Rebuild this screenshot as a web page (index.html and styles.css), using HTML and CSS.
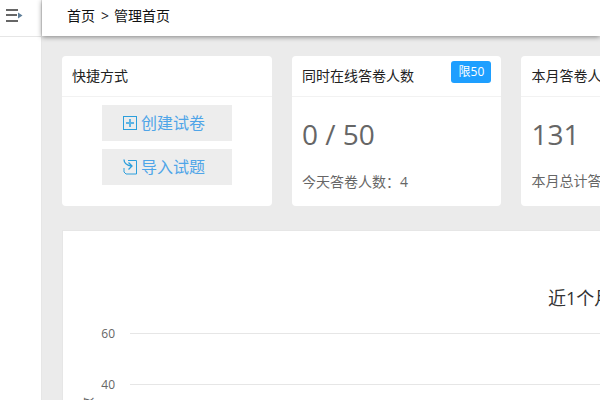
FILE: index.html
```html
<!DOCTYPE html>
<html lang="zh">
<head>
<meta charset="utf-8">
<title>管理首页</title>
<link rel="stylesheet" href="styles.css">
</head>
<body>
<div class="app">
  <aside class="side">
    <div class="side-top">
      <svg class="toggle" width="18" height="14" viewBox="0 0 18 14"><path d="M0 1h12M0 6h11M0 12h12" stroke="#666" stroke-width="2" fill="none"/><path d="M12 3.500l4.500 3-4.500 3z" fill="#5f7f99"/></svg>
    </div>
  </aside>
  <div class="main">
    <header class="top"><span class="crumb-a">首页</span><span class="sep">&gt;</span><span class="crumb-b">管理首页</span></header>
    <div class="content">
      <div class="cards">
        <section class="card">
          <div class="card-head">快捷方式</div>
          <div class="quick">
            <a class="qbtn"><svg width="14" height="14" viewBox="0 0 14 14"><rect x=".5" y=".5" width="13" height="13" fill="none" stroke="#2c9fdc"/><path d="M3 7h8M7 3v8" stroke="#5db4e4" stroke-width="2"/></svg>创建试卷</a>
            <a class="qbtn"><svg width="14" height="16" viewBox="0 0 14 16"><path d="M5 1.500h8.500v13.500H3l-2-2V9" fill="none" stroke="#2c9fdc"/><path d="M1 .5c0 4 3 6 8 6.500M5.500 3.500L9 7l-3.500 3.500" fill="none" stroke="#2c9fdc" stroke-width="1.300"/></svg>导入试题</a>
          </div>
        </section>
        <section class="card">
          <div class="card-head">同时在线答卷人数<span class="badge">限50</span></div>
          <div class="stat">
            <div class="num">0 / 50</div>
            <div class="note">今天答卷人数<span class="fw">：</span>4</div>
          </div>
        </section>
        <section class="card">
          <div class="card-head">本月答卷人数</div>
          <div class="stat">
            <div class="num">131</div>
            <div class="note">本月总计答卷人数</div>
          </div>
        </section>
      </div>
      <section class="chart">
        <h2 class="chart-title">近1个月答卷人数</h2>
        <div class="row r60"><span class="tick">60</span><i class="line"></i></div>
        <div class="row r40"><span class="tick">40</span><i class="line"></i></div>
        <span class="yname">人数</span>
      </section>
    </div>
  </div>
</div>
</body>
</html>
```
FILE: styles.css
```css
* { box-sizing: border-box; }
html, body { margin: 0; height: 100%; overflow: hidden; }
body { font-family: "Open Sans", "Noto Sans CJK SC", sans-serif; background: #fff; }
.app { display: flex; width: 600px; height: 400px; overflow: hidden; }
.side { width: 42px; flex: none; border-right: 1px solid #e6e6e6; background: #fff; }
.side-top { height: 37px; border-bottom: 1px solid #e6e6e6; padding: 9px 0 0 6px; }
.toggle { display: block; }
.main { flex: none; width: 558px; background: #ebebeb; }
.top { height: 36px; background: #fff; box-shadow: 0 1px 5px rgba(0,0,0,.45); padding-left: 25px; line-height: 32px; font-size: 14px; color: #222; display: flex; position: relative; }
.crumb-a { color: #111; }
.sep { margin: 0 5px 0 6px; }
.crumb-b { color: #111; }
.content { padding: 20px 0 0 20px; width: 700px; }
.cards { display: flex; gap: 20px; }
.card { width: 210px; height: 150px; background: #fff; border-radius: 4px; flex: none; }
.card + .card { width: 209.4px; }
.card-head { height: 41px; border-bottom: 1px solid #f2f2f2; padding: 0 10px; line-height: 40px; font-size: 14px; color: #222; display: flex; justify-content: space-between; align-items: center; }
.quick { display: flex; flex-direction: column; align-items: center; gap: 8px; padding-top: 8px; }
.qbtn { width: 130px; height: 36px; background: #ededed; color: #4fa5e8; font-size: 16px; line-height: 34px; padding: 0 0 0 21px; display: flex; align-items: center; gap: 4px; }
.badge { background: #1e9fff; color: #fff; font-size: 12px; height: 22px; line-height: 22px; width: 40px; text-align: center; border-radius: 3px; margin-top: -8px; }
.stat { padding: 19px 10px 0; color: #666; }
.num { font-size: 28px; line-height: 36px; }
.note { font-size: 14px; margin-top: 19px; line-height: 20px; }
.fw { font-family: "Noto Sans CJK TC", sans-serif; }
.chart { margin: 24px 0 0; width: 700px; height: 300px; background: #fff; border: 1px solid #e6e6e6; position: relative; }
.chart-title { margin: 0; position: absolute; left: 485px; top: 55px; font-size: 18px; font-weight: 400; color: #333; line-height: 24px; white-space: nowrap; }
.row { position: absolute; left: 0; display: flex; align-items: center; height: 17px; }
.r60 { top: 94px; }
.r40 { top: 145px; }
.tick { flex: none; width: 52px; text-align: right; font-size: 12px; color: #666; }
.line { flex: none; width: 640px; margin-left: 15px; height: 1px; background: #e6e6e6; }
.yname { position: absolute; left: 14px; top: 166px; font-size: 13px; color: #666; writing-mode: vertical-rl; text-orientation: sideways; transform: rotate(180deg); }
```
